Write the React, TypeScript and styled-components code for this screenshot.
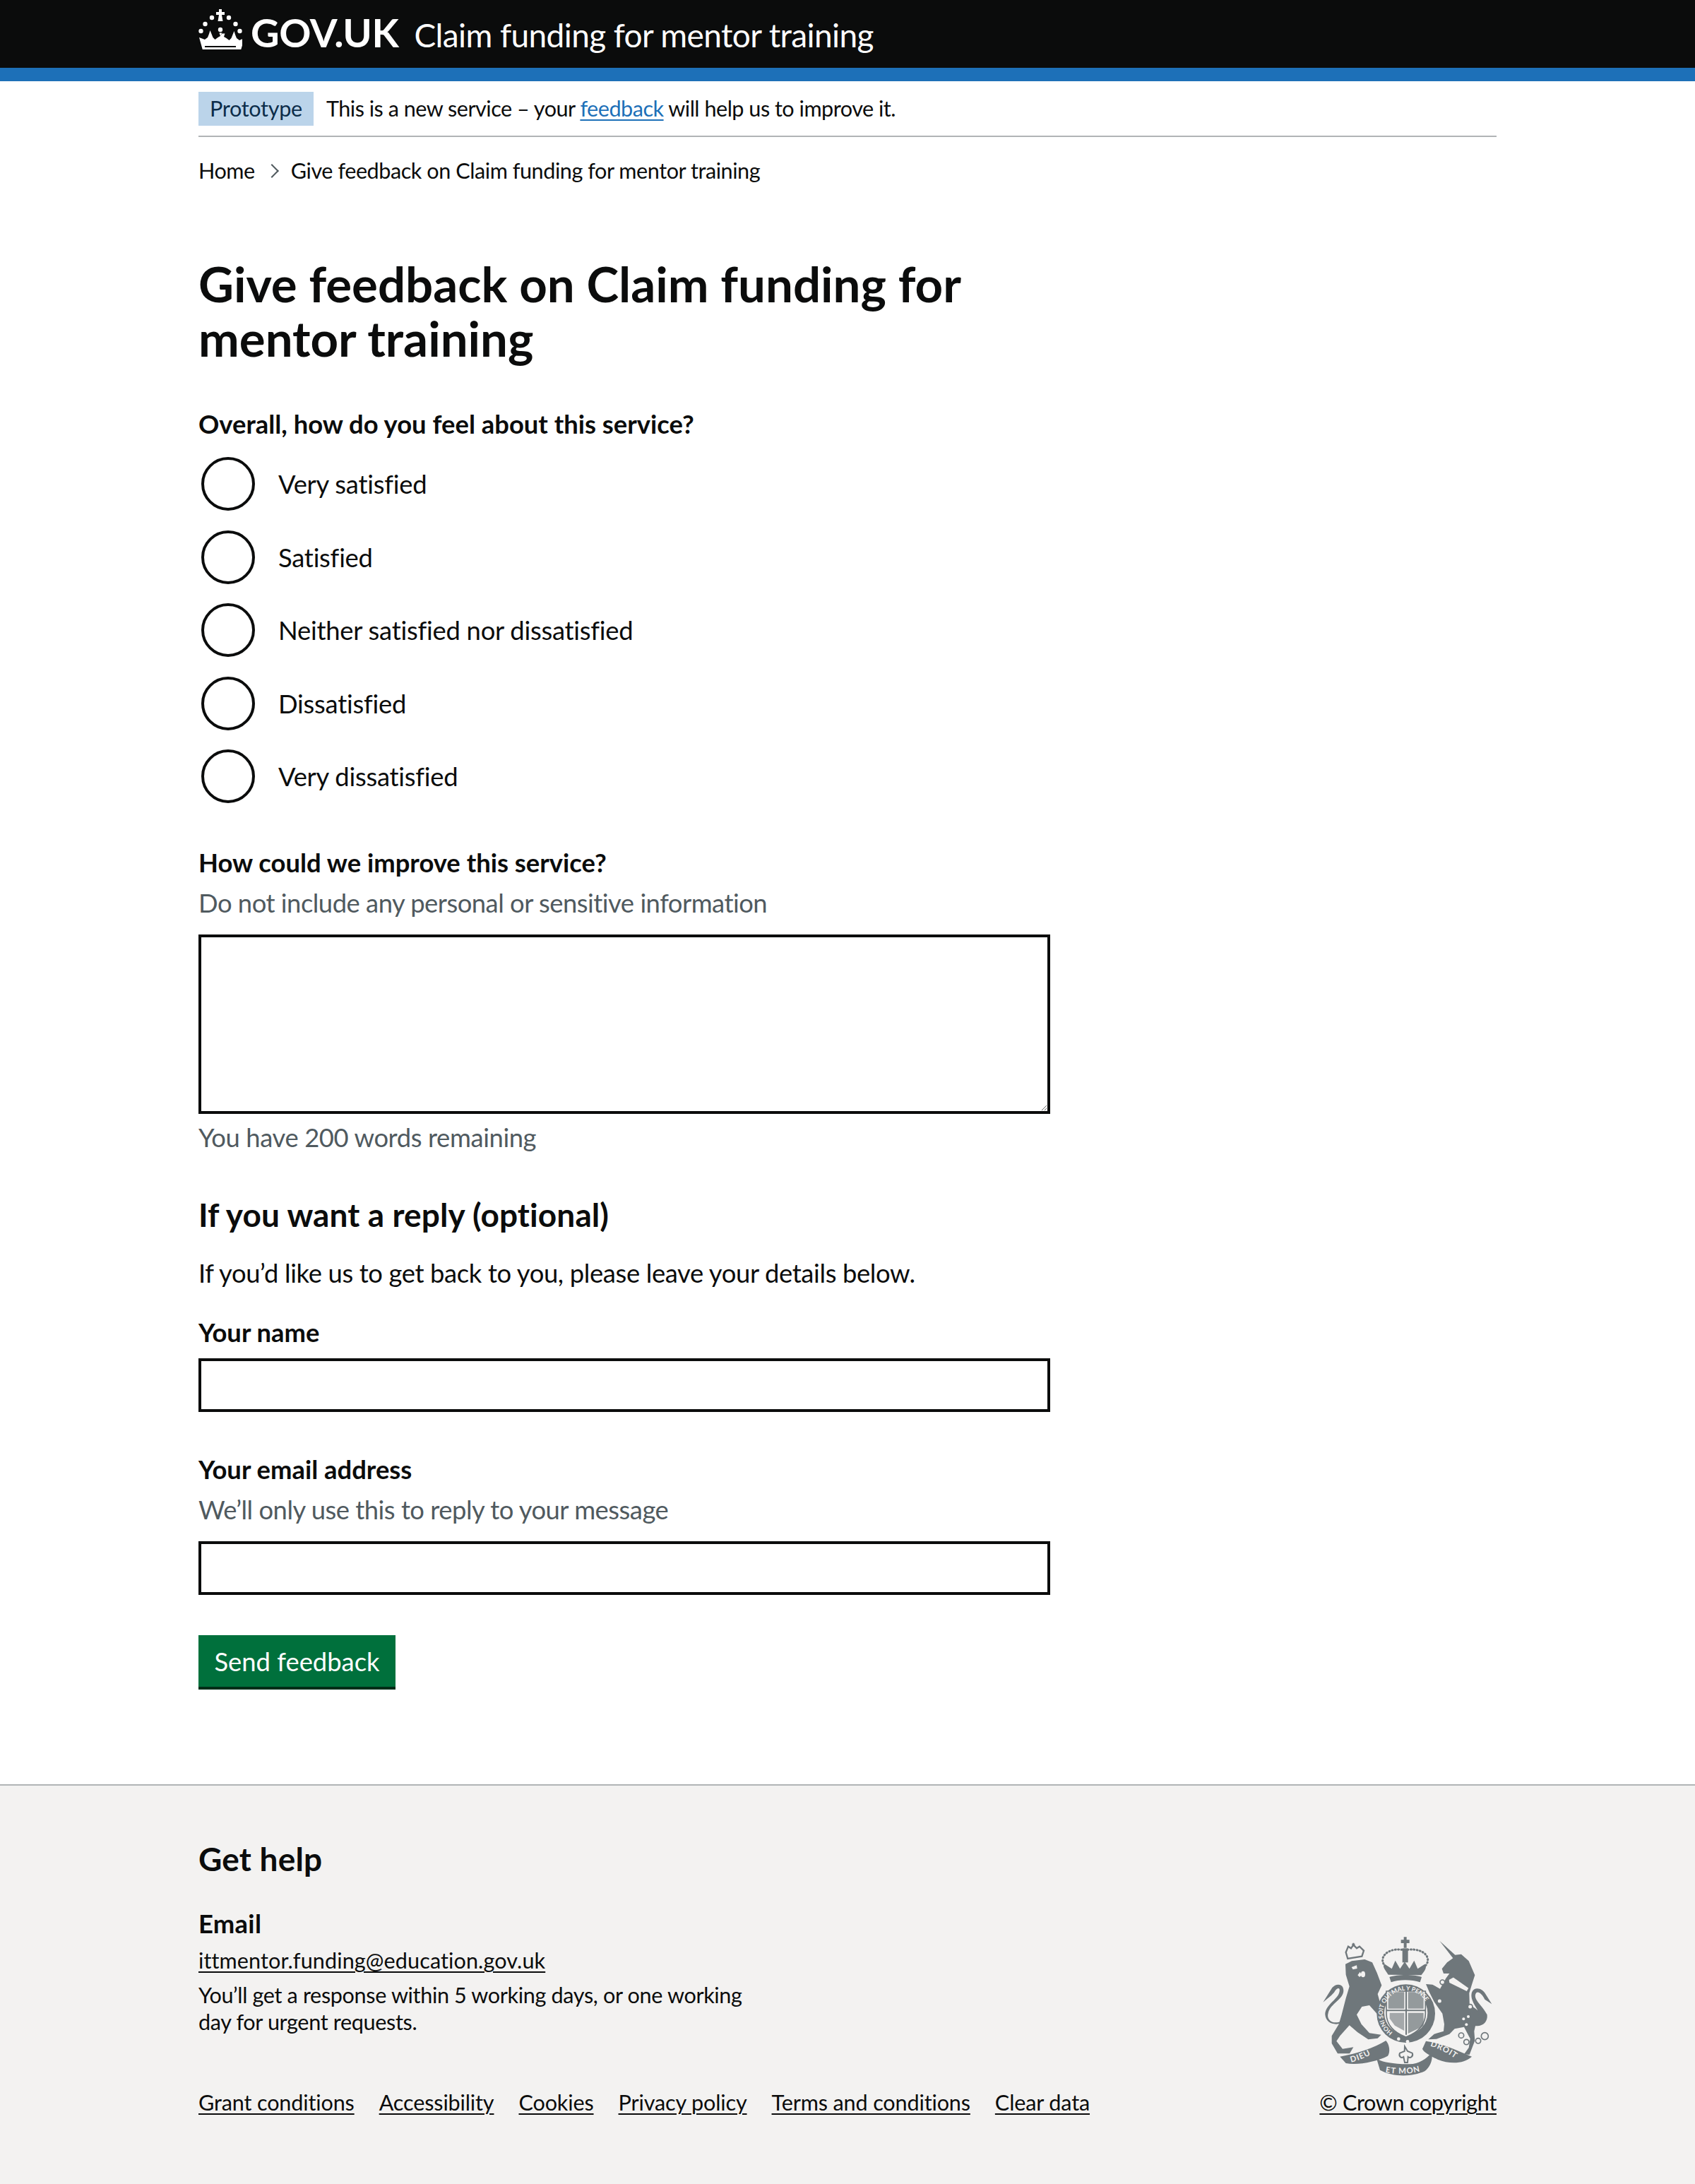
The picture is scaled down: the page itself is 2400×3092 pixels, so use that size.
import React from 'react';
import styled, { createGlobalStyle } from 'styled-components';

const GlobalStyle = createGlobalStyle`
  html, body { margin: 0; padding: 0; background: #fff; }
  body {
    font-family: Lato, "Noto Sans", Arial, sans-serif;
    color: #0b0c0c;
    font-size: 36.4px;
    line-height: 48px;
  }
`;

const Page = styled.div`
  min-height: 3092px;
  display: flex;
  flex-direction: column;
`;

const Container = styled.div`
  width: 1838px;
  margin: 0 auto;
`;

const Header = styled.header`
  background: #0b0c0c;
  height: 96px;
  border-bottom: 19px solid #1d70b8;
`;

const HeaderInner = styled(Container)`
  display: flex;
  align-items: baseline;
  height: 96px;
`;

const Logo = styled.svg`
  width: 62px;
  height: 57px;
  margin: 13px 12px 0 0;
  flex: none;
  align-self: flex-start;
`;

const LogoText = styled.span`
  color: #fff;
  font-weight: 700;
  font-size: 56px;
  line-height: 92px;
  letter-spacing: -0.4px;
  margin-right: 22px;
`;

const ServiceName = styled.span`
  color: #fff;
  font-size: 46px;
  letter-spacing: -0.6px;
`;

const PhaseBanner = styled(Container)`
  display: flex;
  align-items: center;
  padding: 15px 0 14px;
  border-bottom: 2px solid #b1b4b6;
  font-size: 30.6px;
  line-height: 38px;
  letter-spacing: -0.5px;
`;

const PhaseTag = styled.strong`
  background: #bbd4ea;
  color: #0c2d4a;
  font-weight: 400;
  height: 48px;
  line-height: 48px;
  padding: 0 16px;
  margin-right: 18px;
  letter-spacing: -0.3px;
`;

const TextLink = styled.a`
  color: #1d70b8;
  text-decoration: underline;
  text-decoration-thickness: 2px;
  text-underline-offset: 4px;
`;

const Breadcrumbs = styled.nav`
  display: flex;
  align-items: center;
  margin-top: 29px;
  font-size: 30.6px;
  line-height: 38px;
  letter-spacing: -0.45px;
`;

const Chevron = styled.span`
  width: 12px;
  height: 12px;
  margin: 0 20px 0 17px;
  border-top: 2px solid #505a5f;
  border-right: 2px solid #505a5f;
  transform: rotate(45deg);
`;

const Main = styled.main`
  width: 1206px;
  padding-top: 103px;
`;

const Title = styled.h1`
  margin: 0 0 59px;
  font-size: 69px;
  line-height: 76.6px;
  font-weight: 700;
`;

const FieldLabel = styled.label`
  display: block;
  font-weight: 700;
  font-size: 36.4px;
  line-height: 48px;
  margin: -2px 0 0;
`;

const Legend = styled(FieldLabel)`
  margin: 0 0 19px;
`;

const RadioGroup = styled.div`
  display: flex;
  flex-direction: column;
  gap: 19px;
  margin-bottom: 58px;
`;

const RadioRow = styled.label`
  display: flex;
  align-items: center;
  height: 84.4px;
  letter-spacing: -0.25px;
`;

const RadioInput = styled.input`
  appearance: none;
  box-sizing: border-box;
  width: 76px;
  height: 76px;
  margin: 0 33px 0 4px;
  border: 4px solid #0b0c0c;
  border-radius: 50%;
  background: #fff;
`;

const Hint = styled.div`
  color: #505a5f;
  margin-top: 9px;
  letter-spacing: -0.5px;
`;

const TextArea = styled.textarea`
  display: block;
  box-sizing: border-box;
  width: 100%;
  height: 254px;
  margin-top: 21px;
  border: 4px solid #0b0c0c;
  border-radius: 0;
  background: #fff;
`;

const TextField = styled.input<{ $afterHint?: boolean }>`
  display: block;
  box-sizing: border-box;
  width: 100%;
  height: 76px;
  margin-top: ${(props) => (props.$afterHint ? '21px' : '13px')};
  border: 4px solid #0b0c0c;
  border-radius: 0;
`;

const Counter = styled(Hint)`
  letter-spacing: -0.4px;
`;

const SectionHeading = styled.h2`
  margin: 57px 0 29px;
  font-size: 46px;
  line-height: 57.4px;
  font-weight: 700;
  letter-spacing: 0.1px;
`;

const Body = styled.p`
  margin: 0;
  letter-spacing: -0.37px;
`;

const NameField = styled.div`
  margin-top: 38px;
`;

const EmailField = styled.div`
  margin-top: 59px;
`;

const SubmitButton = styled.button`
  display: block;
  box-sizing: border-box;
  height: 77px;
  width: 279px;
  margin-top: 57px;
  padding: 0 0 3px;
  border: 0;
  background: #00703c;
  box-shadow: inset 0 -4px 0 #002d18;
  color: #fff;
  font: inherit;
`;

const Footer = styled.footer`
  margin-top: auto;
  background: #f3f2f1;
  border-top: 2px solid #b1b4b6;
  box-sizing: border-box;
  height: 566px;
  padding-top: 75px;
`;

const FooterInner = styled(Container)`
  display: flex;
  justify-content: space-between;
  align-items: flex-end;
`;

const FooterMain = styled.div`
  display: flex;
  flex-direction: column;
`;

const FooterHeading = styled.h2`
  margin: 0 0 39px;
  font-size: 46px;
  line-height: 57.4px;
  font-weight: 700;
  letter-spacing: 0.2px;
`;

const FooterSubheading = styled.h3`
  margin: 0 0 10px;
  font-size: 36.4px;
  line-height: 48px;
  font-weight: 700;
  letter-spacing: 0.3px;
`;

const FooterText = styled.div`
  font-size: 30.6px;
  line-height: 38.3px;
  letter-spacing: -0.15px;
`;

const EmailLink = styled.a`
  color: #0b0c0c;
  text-decoration: underline;
  text-decoration-thickness: 2px;
  text-underline-offset: 4px;
  letter-spacing: 0.1px;
`;

const FooterLink = styled(EmailLink)`
  letter-spacing: inherit;
`;

const FooterNote = styled(FooterText)`
  width: 790px;
  margin-top: 10px;
  letter-spacing: -0.35px;
`;

const MetaLinks = styled(FooterText)`
  display: flex;
  gap: 35px;
  margin-top: 76px;
`;

const CopyrightBlock = styled(FooterText)`
  display: flex;
  flex-direction: column;
  align-items: flex-end;
  letter-spacing: -0.35px;
`;

const Crest = styled.svg`
  width: 250px;
  height: 200px;
  margin-bottom: 19px;
  display: block;
`;

const CrownLogo = () => (
  <Logo viewBox="0 0 62 57" fill="#fff" aria-hidden>
    <path d="M29 0h4v4h4v4h-4l1.500 9h-7L29 8h-4V4h4z" />
    <circle cx="19" cy="12" r="3.200" />
    <circle cx="43" cy="12" r="3.200" />
    <circle cx="9.500" cy="21" r="3.200" />
    <circle cx="52.500" cy="21" r="3.200" />
    <circle cx="3.500" cy="31" r="3.200" />
    <circle cx="58.500" cy="31" r="3.200" />
    <circle cx="31" cy="29" r="3.200" />
    <path d="M1 40l8 3 4-3 2-5 1.500-5 2 5 2 5 3 3 4-3 3.500-2-1.500-4.500h4L31 38l2.500-3.500h4L36 39l3.500 2 4 3 3-3 2-5 2-5 1.500 5 2 5 4 3 7-3-5 17H6z" />
    <path d="M9 52h44v2H9z" fill="#0b0c0c" />
  </Logo>
);

const CrestImage = () => (
  <Crest viewBox="90 60 750 600" aria-hidden>
    <defs>
      <path id="garterRing" d="M399 475A98 98 0 1 1 530 458" />
      <path id="ribbonLeft" d="M222 602C265 592 305 572 345 545" />
      <path id="ribbonMid" d="M368 644C420 654 490 654 540 632" />
      <path id="ribbonRight" d="M558 533C600 545 645 570 685 602" />
    </defs>
    <g fill="#6f777b" stroke="none">
      {/* lion */}
      <path d="M198 185L225 172 280 165 312 178 332 222 352 275 335 312 346 352 365 400 345 410 322 385 300 360 268 366 246 400 266 440 300 478 350 485 335 500 295 505 250 475 215 445 175 490 160 512 186 545 232 538 216 565 165 565 140 522 140 490 170 440 182 400 200 330 215 280 200 230Z" />
      <path d="M185 425C150 445 115 425 125 392 135 352 190 335 190 298 190 268 160 265 142 285L103 347 138 318 150 305C165 280 178 285 172 305 165 335 110 360 112 400 115 440 160 450 195 430Z" />
      <path d="M200 135l10-25 12 8 10-15 14 15 12-8 18 18-8 24-60 10z" fill="none" stroke="#6f777b" strokeWidth="7" />
      <path d="M226 101h12M232 95v14" stroke="#6f777b" strokeWidth="6" />
      <path d="M246 190l-22 8 6 10 18-4zM260 218l-10 14 8 8 10-8z" fill="#f3f2f1" />
      <ellipse cx="273" cy="228" rx="9" ry="13" fill="#f3f2f1" />

      {/* unicorn */}
      <path d="M598 86L664 146 690 143 722 172 748 232 735 272 724 308 726 372 742 390 755 425 745 470 748 510 725 570 702 568 722 540 728 502 702 452 662 460 640 482 585 503 550 505 575 482 615 470 618 440 610 395 575 345 555 305 540 270 568 272 600 290 625 245 640 225 615 225 608 205 630 178 655 160Z" />
      <path d="M730 360C760 380 790 400 785 435 775 445 755 440 745 430L752 420C765 428 772 420 770 405 760 370 725 340 735 305 745 280 780 285 795 315L820 355 790 335C775 305 755 295 750 315 745 340 780 360 800 400 805 440 765 460 730 440Z" />
      <path d="M635 250l22-12 68 48-10 18-78-38z" fill="#f3f2f1" stroke="#6f777b" strokeWidth="6" />
      <g fill="#f3f2f1" stroke="#6f777b" strokeWidth="5">
        <circle cx="610" cy="262" r="10" />
        <circle cx="598" cy="342" r="10" />
        <circle cx="728" cy="366" r="10" />
        <circle cx="690" cy="488" r="11" />
        <circle cx="712" cy="516" r="11" />
        <circle cx="762" cy="511" r="11" />
        <circle cx="790" cy="491" r="15" />
      </g>
      <g fill="#f3f2f1">
        <circle cx="700" cy="418" r="6" />
        <circle cx="720" cy="408" r="6" />
        <circle cx="712" cy="442" r="6" />
      </g>

      {/* crown over the shield */}
      <path d="M446 70h12v12h12v14h-12v20h-12V96h-12V82h12z" />
      <path d="M440 118h24v60h-24z" />
      <path d="M380 230C360 200 355 195 365 185L395 205 410 170 430 205 450 175 470 205 490 170 505 205 535 185C545 195 540 210 520 232Z" />
      <path d="M385 240C420 228 490 228 522 240L515 262C480 250 425 250 392 262Z" />
      <path d="M438 124C400 118 360 135 356 165 355 185 368 195 378 205M462 124C505 118 545 135 548 165 549 185 535 195 525 205" fill="none" stroke="#6f777b" strokeWidth="9" strokeDasharray="3 10" strokeLinecap="round" />

      {/* garter and shield */}
      <circle cx="455" cy="395" r="124" />
      <circle cx="455" cy="392" r="92" fill="#f3f2f1" />
      <path d="M372 300h166v95c0 55-45 85-83 100-38-15-83-45-83-100z" fill="#f3f2f1" stroke="#6f777b" strokeWidth="5" />
      <path d="M456 290v195M372 382h166" stroke="#6f777b" strokeWidth="6" />
      <path d="M380 304h68v70h-68zM464 304h66v70h-66zM464 392h66v56l-66 32z" fill="#6f777b" opacity="0.72" />
      <path d="M386 392h62v76l-40-22-22-30z" fill="#6f777b" opacity="0.6" />
      <circle cx="424" cy="503" r="7" fill="#f3f2f1" />
      <circle cx="462" cy="514" r="7" fill="#f3f2f1" />

      {/* motto ribbons */}
      <path d="M175 578C250 565 320 540 370 510 385 525 390 560 378 575 330 600 250 615 200 606Z" />
      <path d="M330 585C350 600 380 605 440 610L470 610C510 608 540 590 565 560 570 590 560 620 535 640 480 665 400 665 345 635Z" />
      <path d="M540 512C600 520 670 550 735 578 700 610 640 610 590 590 560 575 530 560 525 545Z" />
      <path d="M450 535l12 20 20 8c6 14-8 24-18 16l-2 24h-12l-5-24c-10 8-22-2-16-16l20-8z" fill="none" stroke="#6f777b" strokeWidth="6" />
      <g fontFamily="Lato, sans-serif" fill="#f3f2f1" fontWeight="700">
        <text fontSize="26"><textPath href="#garterRing">HONI SOIT QUI MAL Y PENSE</textPath></text>
        <g fontSize="34" letterSpacing="3">
          <text><textPath href="#ribbonLeft">DIEU</textPath></text>
          <text><textPath href="#ribbonMid">ET MON</textPath></text>
          <text><textPath href="#ribbonRight">DROIT</textPath></text>
        </g>
      </g>
    </g>
  </Crest>
);

const radioOptions = [
  'Very satisfied',
  'Satisfied',
  'Neither satisfied nor dissatisfied',
  'Dissatisfied',
  'Very dissatisfied',
];

const metaLinks = [
  'Grant conditions',
  'Accessibility',
  'Cookies',
  'Privacy policy',
  'Terms and conditions',
  'Clear data',
];

const App = () => {
  return (
    <Page>
      <GlobalStyle />
      <Header>
        <HeaderInner>
          <CrownLogo />
          <LogoText>GOV.UK</LogoText>
          <ServiceName>Claim funding for mentor training</ServiceName>
        </HeaderInner>
      </Header>
      <PhaseBanner>
        <PhaseTag>Prototype</PhaseTag>
        <span>
          This is a new service – your <TextLink href="#">feedback</TextLink> will help us to improve it.
        </span>
      </PhaseBanner>
      <Container>
        <Breadcrumbs>
          <span>Home</span>
          <Chevron />
          <span>Give feedback on Claim funding for mentor training</span>
        </Breadcrumbs>
        <Main>
          <Title>Give feedback on Claim funding for mentor training</Title>
          <Legend as="div">Overall, how do you feel about this service?</Legend>
          <RadioGroup>
            {radioOptions.map((option) => (
              <RadioRow key={option}>
                <RadioInput type="radio" name="satisfaction" />
                {option}
              </RadioRow>
            ))}
          </RadioGroup>
          <FieldLabel htmlFor="improve">How could we improve this service?</FieldLabel>
          <Hint>Do not include any personal or sensitive information</Hint>
          <TextArea id="improve" />
          <Counter>You have 200 words remaining</Counter>
          <SectionHeading>If you want a reply (optional)</SectionHeading>
          <Body>If you’d like us to get back to you, please leave your details below.</Body>
          <NameField>
            <FieldLabel htmlFor="name">Your name</FieldLabel>
            <TextField id="name" />
          </NameField>
          <EmailField>
            <FieldLabel htmlFor="email">Your email address</FieldLabel>
            <Hint>We’ll only use this to reply to your message</Hint>
            <TextField id="email" $afterHint />
          </EmailField>
          <SubmitButton type="button">Send feedback</SubmitButton>
        </Main>
      </Container>
      <Footer>
        <FooterInner>
          <FooterMain>
            <FooterHeading>Get help</FooterHeading>
            <FooterSubheading>Email</FooterSubheading>
            <FooterText>
              <EmailLink href="#">ittmentor.funding@education.gov.uk</EmailLink>
            </FooterText>
            <FooterNote>You’ll get a response within 5 working days, or one working day for urgent requests.</FooterNote>
            <MetaLinks>
              {metaLinks.map((link) => (
                <FooterLink href="#" key={link}>{link}</FooterLink>
              ))}
            </MetaLinks>
          </FooterMain>
          <CopyrightBlock>
            <CrestImage />
            <FooterLink href="#">© Crown copyright</FooterLink>
          </CopyrightBlock>
        </FooterInner>
      </Footer>
    </Page>
  );
};

export default App;
